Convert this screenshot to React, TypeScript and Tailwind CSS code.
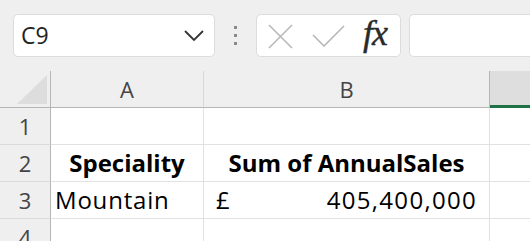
import React from "react";

const cellFont = { fontFamily: '"Open Sans", "Noto Sans", sans-serif' };

export default function App() {
  return (
    <div className="w-[530px] h-[241px] overflow-hidden bg-[#efefef] select-none" style={{ fontFamily: '"Open Sans", "Noto Sans", sans-serif' }}>
      {/* toolbar */}
      <div className="h-[71px] flex items-start pt-[14px] pl-[13px]">
        <div className="w-[202px] h-[43px] bg-white border border-[#dcdcdc] rounded-[5px] flex items-center justify-between pl-[7px] pr-[10px]">
          <span className="text-[23px] text-[#222]">C9</span>
          <svg width="20" height="12" viewBox="0 0 20 12">
            <path d="M1 1 L10 10 L19 1" fill="none" stroke="#333" strokeWidth="1.8" />
          </svg>
        </div>
        <div className="w-[41px] h-[43px] flex flex-col items-center justify-center gap-[5px]">
          <div className="w-[3px] h-[3px] bg-[#8a8a8a]" />
          <div className="w-[3px] h-[3px] bg-[#8a8a8a]" />
          <div className="w-[3px] h-[3px] bg-[#8a8a8a]" />
        </div>
        <div className="w-[145px] h-[43px] bg-white border border-[#dcdcdc] rounded-[5px] flex items-center pl-[11px]">
          <svg width="25" height="25" viewBox="0 0 25 25" className="mt-[1px]">
            <path d="M1 1 L24 24 M24 1 L1 24" stroke="#b8b8b8" strokeWidth="1.6" fill="none" />
          </svg>
          <svg width="33" height="22" viewBox="0 0 33 22" className="ml-[19px]">
            <path d="M1 10 L12 21 L32 1" stroke="#b8b8b8" strokeWidth="1.6" fill="none" />
          </svg>
          <span className="ml-[18px] text-[36px] italic leading-none text-[#2a2a2a] mt-[-6px] tracking-[-1px] [-webkit-text-stroke:0.4px_#2a2a2a]" style={{ fontFamily: '"Liberation Serif", "DejaVu Serif", serif' }}>
            fx
          </span>
        </div>
        <div className="ml-[8px] flex-1 h-[43px] bg-white border border-[#dcdcdc] rounded-l-[5px] border-r-0" />
      </div>
      {/* grid */}
      <div className="grid grid-cols-[51px_153px_286px_1fr] grid-rows-[37px_37px_37px_37px_37px] bg-white">
        {/* header row */}
        <div className="bg-[#efefef] border-r border-b border-[#b5b5b5] relative">
          <div className="absolute left-[17px] top-[4px] w-0 h-0 border-l-[30px] border-l-transparent border-b-[29px] border-b-[#dddddd]" />
        </div>
        <div className="bg-[#efefef] border-r border-r-[#d8d8d8] border-b border-b-[#b5b5b5] flex items-center justify-center text-[22px] text-[#444]">A</div>
        <div className="bg-[#efefef] border-r border-r-[#b5b5b5] border-b border-b-[#b5b5b5] flex items-center justify-center text-[22px] text-[#444]">B</div>
        <div className="bg-[#dedede] border-b-[3px] border-b-[#1e7145]" />

        {/* row 1 */}
        <div className="bg-[#efefef] border-r border-r-[#b5b5b5] border-b border-b-[#dadada] flex items-center justify-center text-[22px] text-[#444]">1</div>
        <div className="border-r border-b border-[#e1e1e1]" />
        <div className="border-r border-b border-[#e1e1e1]" />
        <div className="border-b border-[#e1e1e1]" />

        {/* row 2 */}
        <div className="bg-[#efefef] border-r border-r-[#b5b5b5] border-b border-b-[#dadada] flex items-center justify-center text-[22px] text-[#444]">2</div>
        <div className="border-r border-b border-[#e1e1e1] flex items-center justify-center text-[24px] font-bold text-black" style={cellFont}>Speciality</div>
        <div className="border-r border-b border-[#e1e1e1] flex items-center justify-center text-[24px] font-bold text-black" style={cellFont}>Sum of AnnualSales</div>
        <div className="border-b border-[#e1e1e1]" />

        {/* row 3 */}
        <div className="bg-[#efefef] border-r border-r-[#b5b5b5] border-b border-b-[#dadada] flex items-center justify-center text-[22px] text-[#444]">3</div>
        <div className="border-r border-b border-[#e1e1e1] flex items-center pl-[4px] text-[24px] tracking-[0.8px] text-black" style={cellFont}>Mountain</div>
        <div className="border-r border-b border-[#e1e1e1] flex items-center justify-between pl-[12px] pr-[13px] text-[24px] text-black" style={cellFont}>
          <span>£</span>
          <span className="tracking-[1.3px] mr-[-1px]">405,400,000</span>
        </div>
        <div className="border-b border-[#e1e1e1]" />

        {/* row 4 */}
        <div className="bg-[#efefef] border-r border-r-[#b5b5b5] flex items-center justify-center text-[22px] text-[#444]">4</div>
        <div className="border-r border-[#e1e1e1]" />
        <div className="border-r border-[#e1e1e1]" />
        <div />
      </div>
    </div>
  );
}
